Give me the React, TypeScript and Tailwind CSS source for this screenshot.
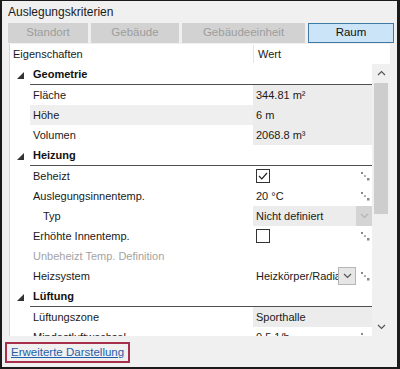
import React from "react";

type Row =
  | { kind: "group"; label: string }
  | {
      kind: "item";
      label: string;
      value?: string;
      indent?: boolean;
      muted?: boolean;
      readOnly?: boolean;
      highlight?: boolean;
      check?: boolean;
      link?: boolean;
      select?: "flat" | "button";
    };

const rows: Row[] = [
  { kind: "group", label: "Geometrie" },
  { kind: "item", label: "Fläche", value: "344.81 m²", readOnly: true },
  { kind: "item", label: "Höhe", value: "6 m", readOnly: true, highlight: true },
  { kind: "item", label: "Volumen", value: "2068.8 m³", readOnly: true },
  { kind: "group", label: "Heizung" },
  { kind: "item", label: "Beheizt", check: true, link: true },
  { kind: "item", label: "Auslegungsinnentemp.", value: "20 °C", link: true },
  { kind: "item", label: "Typ", value: "Nicht definiert", indent: true, readOnly: true, select: "flat" },
  { kind: "item", label: "Erhöhte Innentemp.", check: false, link: true },
  { kind: "item", label: "Unbeheizt Temp. Definition", muted: true },
  { kind: "item", label: "Heizsystem", value: "Heizkörper/Radiator", select: "button", link: true },
  { kind: "group", label: "Lüftung" },
  { kind: "item", label: "Lüftungszone", value: "Sporthalle", readOnly: true },
  { kind: "item", label: "Mindestluftwechsel", value: "0.5 1/h", link: true },
];

const tabs = [
  { label: "Standort", w: "w-[80px]" },
  { label: "Gebäude", w: "w-[88px]" },
  { label: "Gebäudeeinheit", w: "w-[123px]" },
];

const Chevron = ({ up, color = "#444" }: { up?: boolean; color?: string }) => (
  <svg width="9" height="6" viewBox="0 0 9 6">
    <path
      d={up ? "M1 5 L4.5 1.5 L8 5" : "M1 1 L4.5 4.5 L8 1"}
      fill="none"
      stroke={color}
      strokeWidth="1.2"
    />
  </svg>
);

const LinkDots = () => (
  <svg width="9" height="9" viewBox="0 0 9 9">
    <rect x="0" y="0" width="2" height="2" fill="#8a8a8a" />
    <rect x="3" y="3" width="2" height="2" fill="#b0b0b0" />
    <rect x="6" y="6" width="2.5" height="2.5" fill="#8a8a8a" />
  </svg>
);

const Arrow = () => (
  <svg width="7" height="7" viewBox="0 0 7 7">
    <polygon points="7,0 7,7 0,7" fill="#333" />
  </svg>
);

const CheckBox = ({ on }: { on: boolean }) => (
  <div className="w-[14px] h-[14px] border border-[#333] bg-white flex items-center justify-center">
    {on && (
      <svg width="10" height="8" viewBox="0 0 10 8">
        <path d="M1 4 L3.8 6.8 L9 1" fill="none" stroke="#222" strokeWidth="1.2" />
      </svg>
    )}
  </div>
);

const PropertyRow = ({ row }: { row: Row }) => {
  if (row.kind === "group") {
    return (
      <div className="flex h-[21px] shrink-0">
        <div className="w-[20px] flex items-center justify-end pr-[6px] pt-[2px]">
          <Arrow />
        </div>
        <div className="flex-1 border-b border-[#505050] flex items-center pl-[3px] font-bold text-[#111]">
          {row.label}
        </div>
      </div>
    );
  }

  return (
    <div className="flex h-[20px] shrink-0">
      <div className="w-[20px]" />
      <div
        className={`w-[223px] flex items-center ${row.indent ? "pl-[13px]" : "pl-[3px]"} ${
          row.highlight ? "bg-[#efefef]" : ""
        } ${row.muted ? "text-[#a3a3a3]" : "text-[#1a1a1a]"}`}
      >
        {row.label}
      </div>
      <div
        className={`flex-1 flex items-center min-w-0 ${row.readOnly ? "bg-[#ececec]" : ""}`}
      >
        <div className="flex-1 min-w-0 flex items-center pl-[3px] overflow-hidden whitespace-nowrap text-[#1a1a1a]">
          {row.check !== undefined ? <CheckBox on={row.check} /> : row.value}
        </div>
        {row.select === "flat" && (
          <div className="w-[16px] h-[20px] bg-[#d4d4d4] flex items-center justify-center">
            <Chevron color="#b5b5b5" />
          </div>
        )}
        {row.select === "button" && (
          <div className="w-[18px] h-[18px] border border-[#b5b5b5] bg-[#e6e6e6] flex items-center justify-center">
            <Chevron color="#555" />
          </div>
        )}
        {row.link && (
          <div className="w-[16px] h-[20px] flex items-center justify-center pl-[2px]">
            <LinkDots />
          </div>
        )}
        {!row.link && row.select !== "flat" && <div className="w-[16px]" />}
      </div>
    </div>
  );
};

export default function App() {
  return (
    <div
      className="w-[400px] h-[369px] bg-[#f0f0f0] border-t border-l-2 border-r-[3px] border-b-2 border-[#1b1b1b] flex flex-col text-[11px] overflow-hidden"
      style={{ fontFamily: '"Liberation Sans", Arial, sans-serif' }}
    >
      <div className="h-[22px] pl-[6px] flex items-center text-[12px] text-[#1a1a1a] shrink-0">
        Auslegungskriterien
      </div>

      <div className="flex gap-[3px] pl-[6px] h-[20px] shrink-0">
        {tabs.map((t) => (
          <div
            key={t.label}
            className={`${t.w} bg-[#d2d2d2] text-[#9d9d9d] flex items-center justify-center text-[11.5px]`}
          >
            {t.label}
          </div>
        ))}
        <div className="w-[86px] bg-[#cce4f7] border border-[#3f7aa6] text-[#111] flex items-center justify-center text-[11.5px]">
          Raum
        </div>
      </div>

      <div className="mx-[7px] mt-px h-[292px] bg-white border-l border-[#d6d6d6] flex flex-col shrink-0">
        <div className="flex h-[20px] shrink-0">
          <div className="w-[243px] flex items-center pl-[3px] text-[#1a1a1a]">Eigenschaften</div>
          <div className="w-px bg-[#e5e5e5] my-[1px]" />
          <div className="flex-1 flex items-center pl-[4px] text-[#1a1a1a]">Wert</div>
        </div>
        <div className="flex flex-1 min-h-0">
          <div className="flex-1 flex flex-col overflow-hidden">
            {rows.map((r, i) => (
              <PropertyRow key={i} row={r} />
            ))}
          </div>
          <div className="w-[18px] bg-[#f0f0f0] flex flex-col items-center">
            <div className="h-[18px] flex items-center justify-center">
              <Chevron up color="#555" />
            </div>
            <div className="w-[14px] h-[131px] bg-[#cdcdcd] mt-[1px]" />
            <div className="flex-1" />
            <div className="h-[18px] flex items-center justify-center">
              <Chevron color="#555" />
            </div>
          </div>
        </div>
      </div>

      <div className="pl-[3px] pt-[6px]">
        <div className="inline-flex items-center h-[21px] px-[4px] border-2 border-[#a8304c]">
          <span className="text-[#1f5faa] underline text-[11.5px]">Erweiterte Darstellung</span>
        </div>
      </div>
    </div>
  );
}
